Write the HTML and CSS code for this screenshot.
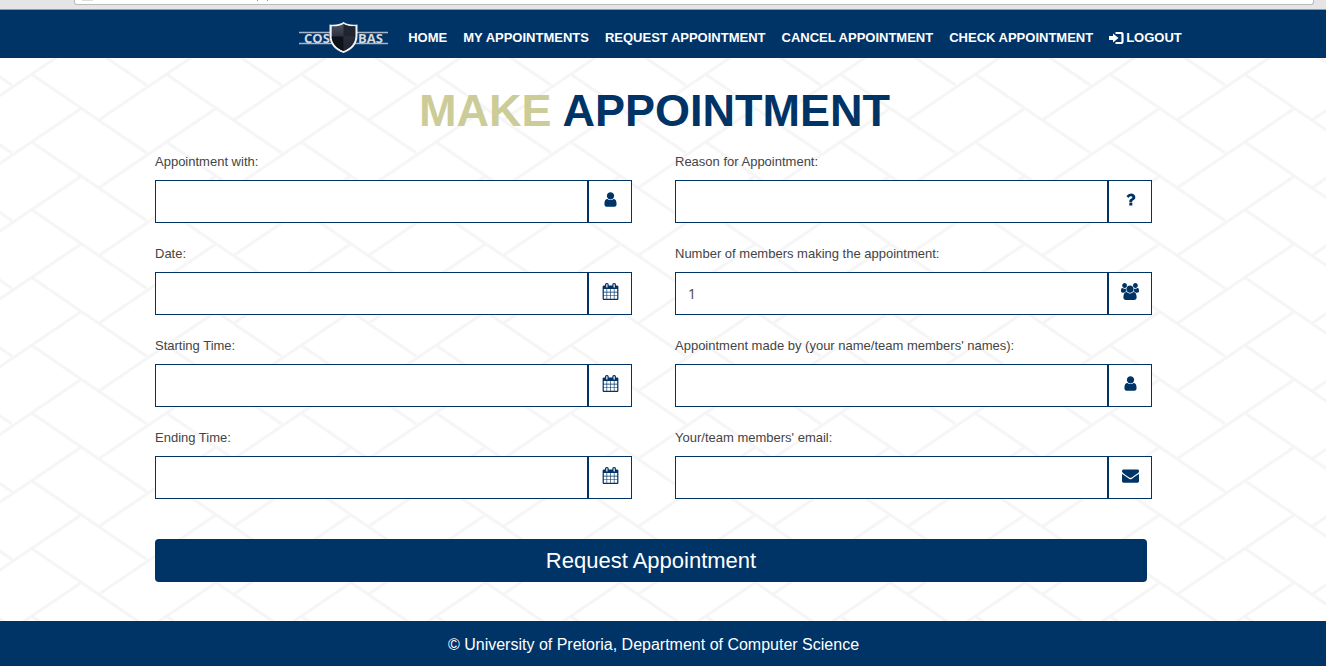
FILE: index.html
```html
<!DOCTYPE html>
<html lang="en">
<head>
<meta charset="utf-8">
<title>Make Appointment</title>
<link rel="stylesheet" href="styles.css">
</head>
<body>
<svg class="sprite" aria-hidden="true">
  <symbol id="user" viewBox="0 0 1792 1792"><path d="M1536 1399q0 109-62.500 187t-150.500 78h-854q-88 0-150.500-78t-62.500-187q0-85 8.500-160.500t31.500-152 58.500-131 94-89 134.500-34.500q131 128 313 128t313-128q76 0 134.500 34.500t94 89 58.500 131 31.500 152 8.500 160.500zm-256-887q0 159-112.500 271.500t-271.500 112.500-271.500-112.500-112.500-271.500 112.500-271.500 271.500-112.500 271.500 112.500 112.500 271.500z"/></symbol>
  <symbol id="users" viewBox="0 0 1920 1792"><path d="M593 896q-162 5-265 128h-134q-82 0-138-40.500t-56-118.500q0-353 124-353 6 0 43.500 21t97.500 42.500 119 21.500q67 0 133-23-5 37-5 66 0 139 81 256zm1071 637q0 120-73 189.500t-194 69.500h-874q-121 0-194-69.500t-73-189.500q0-53 3.500-103.500t14-109 26.500-108.500 43-97.500 62-81 85.500-53.500 111.500-20q10 0 43 21.500t73 48 107 48 135 21.500 135-21.500 107-48 73-48 43-21.500q61 0 111.500 20t85.500 53.500 62 81 43 97.500 26.500 108.500 14 109 3.500 103.500zm-1024-1277q0 106-75 181t-181 75-181-75-75-181 75-181 181-75 181 75 75 181zm704 384q0 159-112.500 271.500t-271.500 112.500-271.500-112.500-112.500-271.500 112.500-271.500 271.500-112.500 271.500 112.500 112.500 271.500zm576 225q0 78-56 118.500t-138 40.500h-134q-103-123-265-128 81-117 81-256 0-29-5-66 66 23 133 23 59 0 119-21.500t97.500-42.500 43.500-21q124 0 124 353zm-128-609q0 106-75 181t-181 75-181-75-75-181 75-181 181-75 181 75 75 181z"/></symbol>
  <symbol id="calendar" viewBox="0 0 1792 1792"><path d="M192 1664h288v-288h-288v288zm352 0h320v-288h-320v288zm-352-352h288v-320h-288v320zm352 0h320v-320h-320v320zm-352-384h288v-288h-288v288zm736 736h320v-288h-320v288zm-384-736h320v-288h-320v288zm768 736h288v-288h-288v288zm-384-352h320v-320h-320v320zm-352-864v-288q0-13-9.500-22.500t-22.500-9.500h-64q-13 0-22.500 9.500t-9.500 22.500v288q0 13 9.500 22.500t22.500 9.500h64q13 0 22.500-9.500t9.500-22.500zm736 864h288v-320h-288v320zm-384-384h320v-288h-320v288zm384 0h288v-288h-288v288zm32-480v-288q0-13-9.500-22.500t-22.500-9.500h-64q-13 0-22.500 9.500t-9.500 22.500v288q0 13 9.500 22.500t22.500 9.500h64q13 0 22.500-9.500t9.500-22.500zm384-64v1280q0 52-38 90t-90 38h-1408q-52 0-90-38t-38-90v-1280q0-52 38-90t90-38h128v-96q0-66 47-113t113-47h64q66 0 113 47t47 113v96h384v-96q0-66 47-113t113-47h64q66 0 113 47t47 113v96h128q52 0 90 38t38 90z"/></symbol>
  <symbol id="question" viewBox="0 0 1792 1792"><path d="M1088 1256v240q0 16-12 28t-28 12h-240q-16 0-28-12t-12-28v-240q0-16 12-28t28-12h240q16 0 28 12t12 28zm316-600q0 54-15.500 101t-35 76.500-55 59.500-57.500 43.500-61 35.500q-41 23-68.500 65t-27.500 67q0 17-12 32.500t-28 15.500h-240q-15 0-25.500-18.500t-10.500-37.500v-45q0-83 65-156.500t143-108.500q59-27 84-56t25-76q0-42-46.500-74t-107.500-32q-65 0-108 29-35 25-107 115-13 16-31 16-12 0-25-8l-164-125q-13-10-15.500-25t5.500-28q160-266 464-266 80 0 161 31t146 83 106 127.500 41 158.500z"/></symbol>
  <symbol id="envelope" viewBox="0 0 1792 1792"><path d="M1792 710v794q0 66-47 113t-113 47h-1472q-66 0-113-47t-47-113v-794q44 49 101 87 362 246 497 345 57 42 92.500 65.500t94.500 48 110 24.500h2q51 0 110-24.500t94.500-48 92.500-65.500q170-123 498-345 57-39 100-87zm0-294q0 79-49 151t-122 123q-376 261-468 325-10 7-42.500 31t-54 38.500-52 32.500-57.500 27-50 9h-2q-23 0-50-9t-57.500-27-52-32.500-54-38.500-42.500-31q-91-64-262-182.500t-205-142.500q-62-42-117-115.500t-55-136.500q0-78 41.500-130t118.500-52h1472q65 0 112.500 47t47.500 113z"/></symbol>
</svg>

<div class="chrome" aria-hidden="true">
  <div class="chrome-field">
    <svg width="220" height="2"><rect x="7" width="11" height="1" fill="#ddd"/><rect x="182" width="1" height="1" fill="#8095b5"/><rect x="192" width="1" height="1" fill="#8095b5"/></svg>
  </div>
</div>

<header class="navbar">
  <nav class="nav" aria-label="Main">
    <a class="brand" href="#" aria-label="COSBAS">
      <svg width="90" height="32" viewBox="0 0 90 32">
        <defs>
          <linearGradient id="steel" x1="0" y1="0" x2="0" y2="1"><stop offset="0" stop-color="#4a5263"/><stop offset="1" stop-color="#0a0c12"/></linearGradient>
        </defs>
        <path d="M0 10.500H89M0 21.500H89" stroke="#a9b6c8" stroke-width="1.600"/>
        <g class="brand-text"><text x="5" y="21">COS</text><text x="59" y="21">BAS</text></g>
        <path d="M44.500 0C41 2.500 36 3 30.500 2.500V14C30.500 22 36 28 44.500 31C53 28 58.500 22 58.500 14V2.500C53 3 48 2.500 44.500 0Z" fill="#f2f2f2"/>
        <path d="M44.500 2C41.500 4 37 4.600 32.700 4.300V14C32.700 20.500 37 26 44.500 29C52 26 56.300 20.500 56.300 14V4.300C52 4.600 47.500 4 44.500 2Z" fill="url(#steel)"/>
        <path d="M44.500 2C47.500 4 52 4.600 56.300 4.300V14.500H44.500Z" fill="#20242f"/>
        <path d="M32.700 14.500H44.500V29C37 26 32.700 20.500 32.700 14.500Z" fill="#10121a"/>
        <path d="M44.500 14.500H56.300C56.300 20.500 52 26 44.500 29Z" fill="#262b38" opacity=".8"/>
      </svg>
    </a>
    <a href="#">HOME</a>
    <a href="#">MY APPOINTMENTS</a>
    <a href="#">REQUEST APPOINTMENT</a>
    <a href="#">CANCEL APPOINTMENT</a>
    <a href="#">CHECK APPOINTMENT</a>
    <a class="logout" href="#"><svg width="15" height="12" viewBox="0 0 15 12" aria-hidden="true"><path d="M0 4H4V1.500L9.500 6 4 10.500V8H0Z" fill="#fff"/><path d="M6.500 1H12a1.500 1.500 0 0 1 1.500 1.500v7A1.500 1.500 0 0 1 12 11H6.500" fill="none" stroke="#fff" stroke-width="2.200"/></svg>LOGOUT</a>
  </nav>
</header>

<main class="page">
  <svg class="weave" aria-hidden="true">
    <defs>
      <pattern id="bricks" width="134.800" height="67.750" patternUnits="userSpaceOnUse">
        <g fill="none" stroke="#f5f5f5" stroke-width="3">
          <g id="strands">
            <path d="M32.300 16.700 146.700 95M32.300-51.050 146.700 27.250"/>
            <path d="M99.300 61.700 215-16.700M99.300 129.450 215 51.050"/>
          </g>
          <use href="#strands" x="-134.800"/>
        </g>
      </pattern>
    </defs>
    <rect width="100%" height="100%" fill="url(#bricks)"/>
  </svg>

  <form class="form">
    <h1 class="title"><span class="accent">MAKE</span> APPOINTMENT</h1>
    <div class="fields">
      <div class="field">
        <label for="with">Appointment with:</label>
        <div class="group"><input id="with" type="text"><span class="addon"><svg class="icon"><use href="#user"/></svg></span></div>
      </div>
      <div class="field">
        <label for="reason">Reason for Appointment:</label>
        <div class="group"><input id="reason" type="text"><span class="addon"><svg class="icon"><use href="#question"/></svg></span></div>
      </div>
      <div class="field">
        <label for="date">Date:</label>
        <div class="group"><input id="date" type="text"><span class="addon"><svg class="icon"><use href="#calendar"/></svg></span></div>
      </div>
      <div class="field">
        <label for="members">Number of members making the appointment:</label>
        <div class="group"><input id="members" type="text" value="1"><span class="addon"><svg class="icon icon-wide"><use href="#users"/></svg></span></div>
      </div>
      <div class="field">
        <label for="start">Starting Time:</label>
        <div class="group"><input id="start" type="text"><span class="addon"><svg class="icon"><use href="#calendar"/></svg></span></div>
      </div>
      <div class="field">
        <label for="names">Appointment made by (your name/team members' names):</label>
        <div class="group"><input id="names" type="text"><span class="addon"><svg class="icon"><use href="#user"/></svg></span></div>
      </div>
      <div class="field">
        <label for="end">Ending Time:</label>
        <div class="group"><input id="end" type="text"><span class="addon"><svg class="icon"><use href="#calendar"/></svg></span></div>
      </div>
      <div class="field">
        <label for="email">Your/team members' email:</label>
        <div class="group"><input id="email" type="text"><span class="addon"><svg class="icon"><use href="#envelope"/></svg></span></div>
      </div>
    </div>
    <button class="submit" type="submit">Request Appointment</button>
  </form>
</main>

<footer class="footer">© University of Pretoria, Department of Computer Science</footer>
</body>
</html>
```

FILE: styles.css
```css
* {
  box-sizing: border-box;
}

body {
  display: flex;
  flex-direction: column;
  min-height: 100vh;
  margin: 0;
  background: #fff;
  color: #444;
  font-family: "Liberation Sans", Arial, sans-serif;
  font-size: 13px;
}

.sprite {
  position: absolute;
  width: 0;
  height: 0;
}

.chrome {
  height: 10px;
  padding: 0 12px 0 74px;
  background: #e5e5e5;
  border-bottom: 1px solid #999;
}

.chrome-field {
  height: 5px;
  overflow: hidden;
  background: #fff;
  border: 1px solid #bbb;
  border-top: 0;
  border-radius: 0 0 3px 3px;
}

.chrome-field svg {
  display: block;
}

.navbar {
  padding-left: 155px;
  background: #003366;
}

.nav {
  display: flex;
  justify-content: center;
  align-items: center;
  gap: 16px;
  height: 48px;
  padding-top: 7px;
}

.nav a {
  color: #fff;
  font-weight: bold;
  line-height: 16px;
  text-decoration: none;
  white-space: nowrap;
}

.nav svg {
  display: block;
}

.nav .brand {
  margin-right: 3px;
}

.brand-text {
  fill: #d5d8dd;
  font-family: "Open Sans", sans-serif;
  font-size: 13px;
  font-weight: bold;
}

.nav .logout {
  display: flex;
  align-items: center;
  gap: 2px;
}

.page {
  position: relative;
  flex: 1;
  padding: 27px 19px 39px 0;
}

.weave {
  position: absolute;
  inset: 0;
  width: 100%;
  height: 100%;
}

.form {
  position: relative;
  max-width: 997px;
  margin: 0 auto;
}

.title {
  margin: 0 0 15px;
  padding-left: 2px;
  color: #003366;
  font-size: 45px;
  line-height: 52px;
  text-align: center;
}

.accent {
  color: #cccc99;
}

.fields {
  display: grid;
  grid-template-columns: 1fr 1fr;
  gap: 21px 43px;
}

.field label {
  display: block;
  margin-bottom: 9px;
  line-height: 19px;
}

.group {
  display: flex;
  height: 43px;
}

.group input {
  flex: 1;
  min-width: 0;
  padding: 0 12px;
  background: #fff;
  border: 1px solid #003366;
  border-radius: 0;
  color: #444;
  font-family: "Open Sans", sans-serif;
  font-size: 14px;
}

.addon {
  display: flex;
  justify-content: center;
  align-items: center;
  width: 44px;
  padding-bottom: 5px;
  background: #fff;
  border: 1px solid #003366;
}

.icon {
  width: 17px;
  height: 17px;
  fill: #003366;
}

.icon-wide {
  width: 18px;
}

.submit {
  display: block;
  width: calc(100% - 5px);
  height: 43px;
  margin-top: 40px;
  background: #003366;
  border: 0;
  border-radius: 4px;
  color: #fff;
  font-family: inherit;
  font-size: 22px;
}

.footer {
  padding: 13px 19px 11px 0;
  background: #003366;
  color: #fff;
  font-size: 16px;
  line-height: 21px;
  text-align: center;
}
```
